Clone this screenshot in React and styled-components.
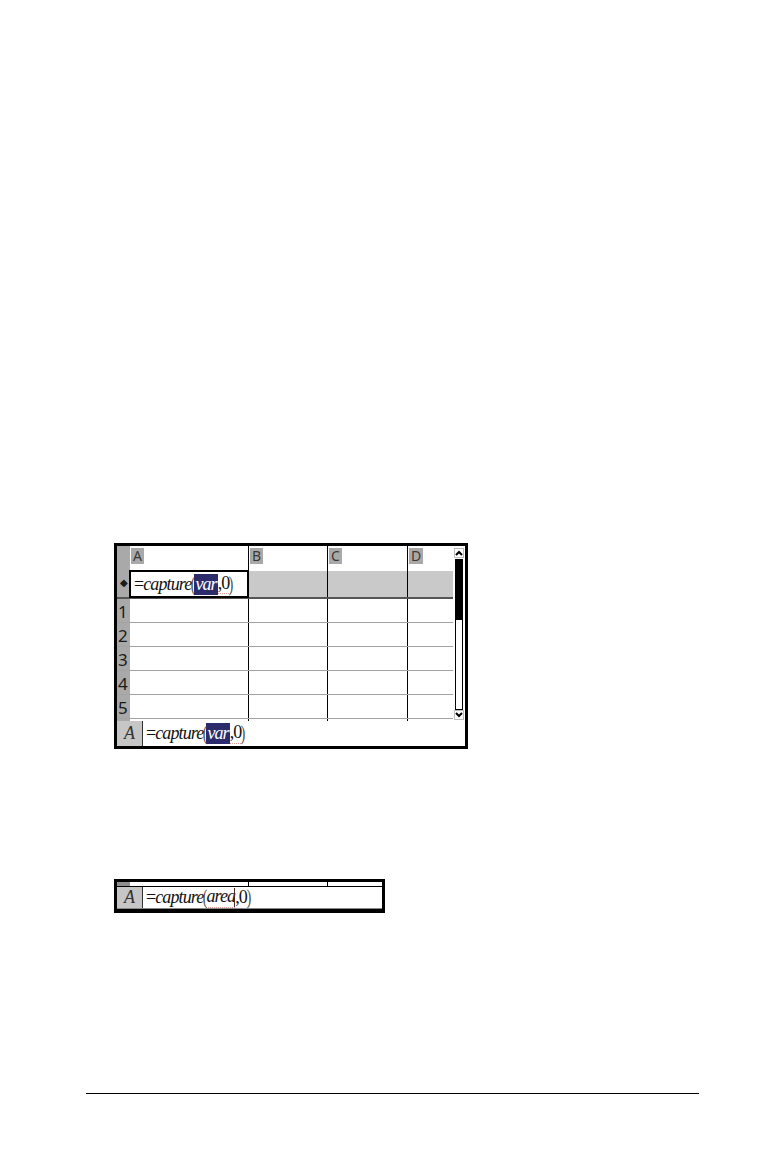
import React from 'react';
import styled, { createGlobalStyle } from 'styled-components';

const GlobalStyle = createGlobalStyle`
  html, body {
    margin: 0;
    padding: 0;
    background: #fff;
  }
  body {
    width: 764px;
    height: 1160px;
    overflow: hidden;
    font-family: "Noto Sans", "Liberation Sans", sans-serif;
  }
`;

const COLS = '13px 119px 79px 80px 45px';

const Page = styled.div`
  display: flex;
  flex-direction: column;
  align-items: flex-start;
  width: 764px;
  height: 1160px;
  background: #fff;
`;

const Sheet = styled.div`
  margin-top: 543px;
  margin-left: 114px;
  width: 348px;
  border: 3px solid #000;
  display: flex;
  flex-direction: column;
  background: #fff;
`;

const SheetBody = styled.div`
  display: flex;
`;

const Grid = styled.div`
  display: flex;
  flex-direction: column;
  width: 336px;
`;

const Row = styled.div`
  display: grid;
  grid-template-columns: ${COLS};
  height: ${p => p.$h}px;
  box-sizing: border-box;
  border-bottom: ${p => p.$line || '1px solid #a3a3a3'};
`;

const RowNum = styled.div`
  background: ${p => p.$dark ? '#8f8f8f' : '#a9a9a9'};
  color: #1a1a1a;
  font-size: 17px;
  line-height: 1;
  display: flex;
  align-items: flex-end;
  justify-content: ${p => p.$center ? 'center' : 'flex-start'};
  padding-left: ${p => p.$center ? 0 : 1}px;
  padding-bottom: 2px;
  box-sizing: border-box;
  overflow: hidden;
`;

const Cell = styled.div`
  border-right: ${p => p.$last ? 'none' : '1px solid #000'};
  background: ${p => p.$shade ? '#c9c9c9' : '#fff'};
  box-sizing: border-box;
  display: flex;
  align-items: center;
  padding-left: 1px;
  overflow: hidden;
`;

const ActiveCell = styled.div`
  border: 2px solid #000;
  margin: -1px 0 -1px -1px;
  background: #fff;
  display: flex;
  align-items: center;
  padding-left: 3px;
  box-sizing: border-box;
  overflow: hidden;
`;

const ColTag = styled.span`
  background: #a9a9a9;
  color: #3a3a3a;
  font-size: 14px;
  line-height: 16px;
  padding: 0 2px;
  margin-top: -5px;
`;

const Dot = styled.span`
  font-size: 10px;
  line-height: 1;
  margin-bottom: 8px;
`;

const Scroll = styled.div`
  width: 12px;
  display: flex;
  flex-direction: column;
  align-items: center;
  padding-top: 2px;
  box-sizing: border-box;
`;

const ArrowBox = styled.div`
  width: 10px;
  height: 10px;
  border: 1px solid #bdbdbd;
  box-sizing: border-box;
  display: flex;
  align-items: center;
  justify-content: center;
  background: #fff;
`;

const Thumb = styled.div`
  width: 8px;
  height: 61px;
  background: #000;
  margin-top: 1px;
`;

const Track = styled.div`
  width: 8px;
  height: 90px;
  border: 1px solid #000;
  border-top: none;
  box-sizing: border-box;
`;

const FormulaBar = styled.div`
  display: flex;
  height: ${p => p.$h}px;
  box-sizing: border-box;
  border-bottom: ${p => p.$bottom || 'none'};
`;

const BarLabel = styled.div`
  width: 25px;
  background: #c6c6c6;
  border-right: 1px solid #333;
  display: flex;
  align-items: center;
  justify-content: center;
  font-family: "Liberation Serif", serif;
  font-style: italic;
  font-size: 18px;
  color: #333;
`;

const BarText = styled.div`
  flex: 1;
  display: flex;
  align-items: center;
  padding-left: 3px;
`;

const Formula = styled.span`
  font-family: "Liberation Serif", serif;
  font-size: 18px;
  color: #111;
  display: inline-flex;
  align-items: center;
  white-space: nowrap;
  letter-spacing: -0.9px;
`;

const Ital = styled.span`
  font-style: italic;
`;

const Paren = styled.span`
  display: inline-block;
  transform: scale(0.75, 1.2);
  color: #444;
  margin: 0 -1px;
`;

const Hi = styled.span`
  font-style: italic;
  background: #2c2c6c;
  color: #fff;
  padding: 0 1px;
`;

const Dotted = styled.span`
  border-bottom: 1px dotted #e39a9a;
  line-height: 1.1;
`;

const Caret = styled.span`
  display: inline-block;
  width: 1px;
  height: 19px;
  background: #4a2a2a;
  margin: 0 0 0 -1px;
`;

const Strip = styled.div`
  margin-top: 130px;
  margin-left: 114px;
  width: 265px;
  border: 3px solid #000;
  border-bottom-width: 4px;
  display: flex;
  flex-direction: column;
  background: #fff;
`;

const StripTop = styled.div`
  display: grid;
  grid-template-columns: 13px 119px 79px 54px;
  height: 4px;
  border-bottom: 1px solid #000;
`;

const Rule = styled.div`
  margin-top: 180px;
  margin-left: 86px;
  width: 613px;
  height: 1px;
  background: #000;
`;

function Chevron({ up }) {
  return (
    <svg width="8" height="6" viewBox="0 0 8 6">
      <path
        d={up ? 'M1 5 L4 2 L7 5' : 'M1 1 L4 4 L7 1'}
        fill="none"
        stroke="#000"
        strokeWidth="2"
      />
    </svg>
  );
}

function CaptureVar() {
  return (
    <Formula>
      <span>=</span>
      <Ital>capture</Ital>
      <Paren>(</Paren>
      <Hi>var</Hi>
      <Dotted>,0</Dotted>
      <Paren>)</Paren>
    </Formula>
  );
}

function CaptureArea() {
  return (
    <Formula>
      <span>=</span>
      <Ital>capture</Ital>
      <Paren>(</Paren>
      <Dotted><Ital>area</Ital></Dotted>
      <Caret />
      <span>,0</span>
      <Paren>)</Paren>
    </Formula>
  );
}

const headers = ['A', 'B', 'C', 'D'];
const rows = [1, 2, 3, 4, 5];

export default function App() {
  return (
    <Page>
      <GlobalStyle />
      <Sheet>
        <SheetBody>
          <Grid>
            <Row $h={25} $line="none">
              <RowNum />
              {headers.map((h, i) => (
                <Cell key={h} $last={i === 3}>
                  <ColTag>{h}</ColTag>
                </Cell>
              ))}
            </Row>
            <Row $h={28} $line="2px solid #555">
              <RowNum $center>
                <Dot>◆</Dot>
              </RowNum>
              <ActiveCell>
                <CaptureVar />
              </ActiveCell>
              <Cell $shade />
              <Cell $shade />
              <Cell $shade $last />
            </Row>
            {rows.map(n => (
              <Row key={n} $h={24}>
                <RowNum>{n}</RowNum>
                <Cell />
                <Cell />
                <Cell />
                <Cell $last />
              </Row>
            ))}
            <Row $h={2} $line="1px solid #8a8a8a">
              <RowNum />
              <Cell />
              <Cell />
              <Cell />
              <Cell $last />
            </Row>
          </Grid>
          <Scroll>
            <ArrowBox><Chevron up /></ArrowBox>
            <Thumb />
            <Track />
            <ArrowBox><Chevron /></ArrowBox>
          </Scroll>
        </SheetBody>
        <FormulaBar $h={25}>
          <BarLabel>A</BarLabel>
          <BarText>
            <CaptureVar />
          </BarText>
        </FormulaBar>
      </Sheet>

      <Strip>
        <StripTop>
          <RowNum $dark />
          <Cell />
          <Cell />
          <Cell $last />
        </StripTop>
        <FormulaBar $h={22} $bottom="1px solid #8a8a8a">
          <BarLabel>A</BarLabel>
          <BarText>
            <CaptureArea />
          </BarText>
        </FormulaBar>
      </Strip>

      <Rule />
    </Page>
  );
}
